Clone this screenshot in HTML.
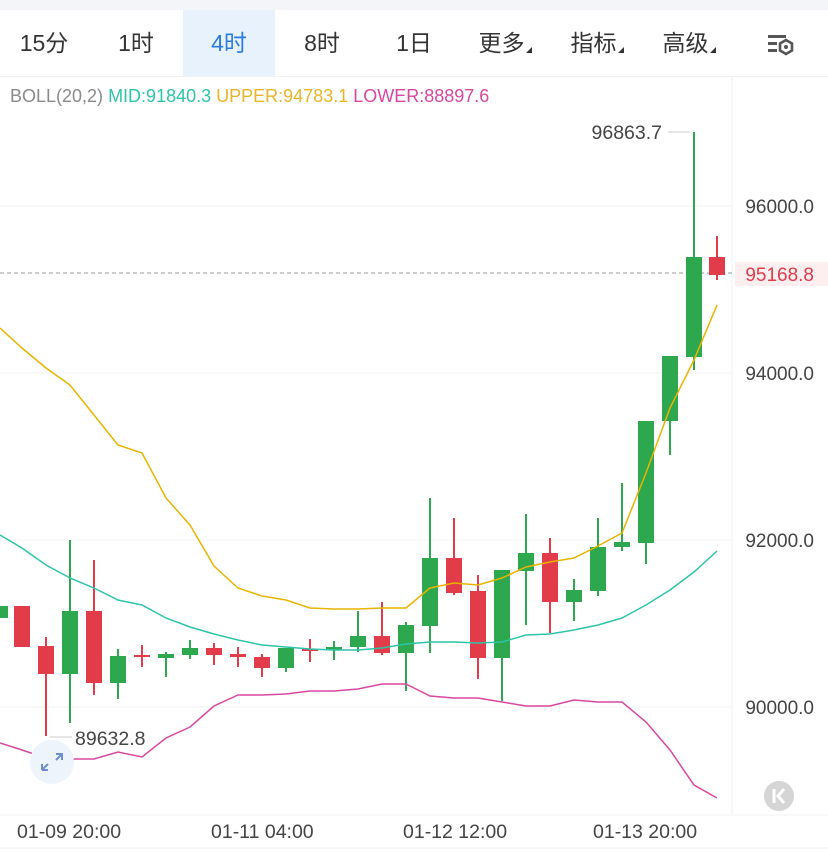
<!DOCTYPE html>
<html><head><meta charset="utf-8"><style>
body{margin:0;width:828px;height:852px;overflow:hidden;background:#fff;font-family:"Liberation Sans","Noto Sans CJK SC",sans-serif;position:relative}
.top{position:absolute;left:0;top:0;width:828px;height:10px;background:#f3f5f8}
.tabs{position:absolute;top:10px;left:0;width:828px;height:66px;border-bottom:1px solid #f0f0f0}
.tab{position:absolute;top:0;height:66px;line-height:66px;font-size:23px;color:#333;text-align:center}
.sel{background:#e8f2fd;color:#2a7ce0}
.tri{display:inline-block;width:0;height:0;border-left:6px solid transparent;border-bottom:6px solid #333;vertical-align:-2px;margin-left:1px}
</style></head><body>
<div class="top"></div>
<div class="tabs">
<div class="tab" style="left:12px;width:64px">15分</div>
<div class="tab" style="left:106px;width:60px">1时</div>
<div class="tab sel" style="left:183px;width:92px">4时</div>
<div class="tab" style="left:292px;width:60px">8时</div>
<div class="tab" style="left:384px;width:60px">1日</div>
<div class="tab" style="left:470px;width:70px">更多<span class="tri"></span></div>
<div class="tab" style="left:562px;width:70px">指标<span class="tri"></span></div>
<div class="tab" style="left:654px;width:70px">高级<span class="tri"></span></div>
<svg style="position:absolute;left:766px;top:22px" width="30" height="24" viewBox="0 0 30 24"><g fill="#555"><rect x="2" y="3" width="18" height="3"/><rect x="2" y="10" width="9" height="3"/><rect x="2" y="17" width="9" height="3"/></g><path d="M20 8l6 3.5v7L20 22l-6-3.5v-7z" fill="none" stroke="#555" stroke-width="2.6"/><circle cx="20" cy="15" r="2" fill="#555"/></svg>
</div>
<svg style="position:absolute;left:0;top:0" width="828" height="852">
<line x1="732" y1="77" x2="732" y2="815" stroke="#f0f0f0"/>
<g stroke="#f3f3f3"><line x1="0" y1="206" x2="732" y2="206"/><line x1="0" y1="373" x2="732" y2="373"/><line x1="0" y1="540" x2="732" y2="540"/><line x1="0" y1="707" x2="732" y2="707"/><line x1="0" y1="815" x2="828" y2="815"/><line x1="0" y1="848" x2="828" y2="848"/></g>
<text x="10" y="102" font-size="18" fill="#8a8a8a">BOLL(20,2) <tspan fill="#2ec4a8">MID:91840.3</tspan> <tspan fill="#e8b42a">UPPER:94783.1</tspan> <tspan fill="#d8479f">LOWER:88897.6</tspan></text>
<g font-size="19" fill="#444" text-anchor="end"><text x="814" y="213">96000.0</text><text x="814" y="380">94000.0</text><text x="814" y="547">92000.0</text><text x="814" y="714">90000.0</text></g>
<line x1="0" y1="273" x2="735" y2="273" stroke="#999" stroke-dasharray="4,3"/>
<rect x="735" y="262" width="93" height="24" fill="#fdeef0"/>
<text x="814" y="281" font-size="19" fill="#e03c4a" text-anchor="end">95168.8</text>
<text x="662" y="139" font-size="19.5" fill="#444" text-anchor="end">96863.7</text><line x1="668" y1="132" x2="690" y2="132" stroke="#ccc"/>
<text x="75" y="745" font-size="19.5" fill="#444">89632.8</text><line x1="50" y1="737" x2="72" y2="737" stroke="#ccc"/>
<g font-size="19.5" fill="#444"><text x="17" y="838">01-09 20:00</text><text x="211" y="838">01-11 04:00</text><text x="403" y="838">01-12 12:00</text><text x="593" y="838">01-13 20:00</text></g>
<g id="c"></g>
<polyline fill="none" stroke="#e8b400" stroke-width="1.5" points="0,328 22,348 46,368 70,385 94,415 118,445 142,453 166,498 190,525 214,566 238,588 262,596 286,600 310,608 334,609 358,609 382,608 406,608 430,588 454,583 478,585 502,578 526,567 550,562 574,558 598,546 622,533 646,473 670,408 694,360 717,305"/>
<polyline fill="none" stroke="#2ec4a8" stroke-width="1.5" points="0,535 22,548 46,565 70,578 94,588 118,600 142,605 166,618 190,627 214,634 238,640 262,645 286,647 310,649 334,650 358,650 382,648 406,644 430,642 454,642 478,643 502,642 526,635 550,634 574,630 598,625 622,618 646,605 670,590 694,572 717,551"/>
<polyline fill="none" stroke="#d8479f" stroke-width="1.5" points="0,743 22,750 46,758 70,759 94,759 118,752 142,757 166,738 190,727 214,706 238,695 262,695 286,694 310,691 334,691 358,689 382,684 406,684 430,696 454,698 478,698 502,702 526,706 550,706 574,700 598,702 622,702 646,722 670,750 694,785 717,798"/>
<circle cx="52" cy="762" r="22" fill="#eef4fc"/>
<path d="M56 754h6v6M62 754l-6 6M42 770h6M42 770v-6M42 770l6-6" stroke="#6b8fd0" stroke-width="2" fill="none"/>
<circle cx="779" cy="796" r="15" fill="#d5d5d5"/>
<path d="M774 789v14M784 789l-6 7 6 7" stroke="#fff" stroke-width="3" fill="none"/>
</svg>
<script>
var d=[[0,'g',606,618,606,618],[22,'r',606,647,606,647],[46,'r',646,674,637,736],[70,'g',611,674,540,723],[94,'r',611,683,560,695],[118,'g',656,683,649,699],[142,'r',655,657,645,667],[166,'g',654,658,652,677],[190,'g',648,655,640,659],[214,'r',648,655,643,665],[238,'r',654,657,647,667],[262,'r',657,668,654,677],[286,'g',648,668,648,672],[310,'r',649,651,639,662],[334,'g',647,650,641,660],[358,'g',636,647,611,652],[382,'r',636,653,602,655],[406,'g',625,653,622,691],[430,'g',558,626,498,653],[454,'r',558,593,518,595],[478,'r',591,658,575,679],[502,'g',570,658,570,701],[526,'g',553,571,514,625],[550,'r',553,602,538,633],[574,'g',590,602,579,621],[598,'g',547,591,518,596],[622,'g',542,547,483,551],[646,'g',421,543,421,564],[670,'g',356,421,356,455],[694,'g',257,357,132,370],[717,'r',257,275,236,280]];
var s='';d.forEach(function(c){var col=c[1]=='g'?'#2ea84f':'#e23c4a';s+='<line x1="'+c[0]+'" x2="'+c[0]+'" y1="'+c[4]+'" y2="'+c[5]+'" stroke="'+col+'" stroke-width="2"/><rect x="'+(c[0]-8)+'" y="'+c[2]+'" width="16" height="'+Math.max(2,c[3]-c[2])+'" fill="'+col+'"/>';});
document.getElementById('c').innerHTML=s;
</script>
</body></html>
